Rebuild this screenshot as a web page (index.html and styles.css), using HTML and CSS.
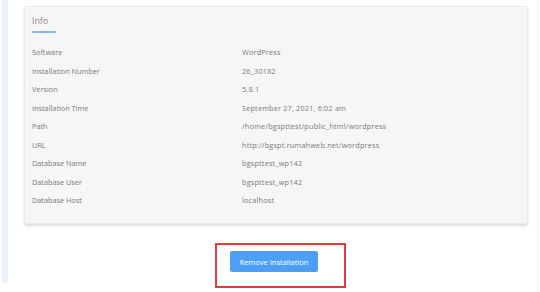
FILE: index.html
```html
<!DOCTYPE html>
<html>
<head>
<meta charset="utf-8">
<link rel="stylesheet" href="styles.css">
</head>
<body>
<div class="frame">
  <div class="strip"></div>
  <div class="content">
    <div class="card">
      <div class="title">Info</div>
      <div class="underline"></div>
      <div class="rows">
        <div class="label">Software</div><div class="value">WordPress</div>
        <div class="label">Installation Number</div><div class="value">26_30182</div>
        <div class="label">Version</div><div class="value">5.8.1</div>
        <div class="label">Installation Time</div><div class="value">September 27, 2021, 6:02 am</div>
        <div class="label">Path</div><div class="value">/home/bgspttest/public_html/wordpress</div>
        <div class="label">URL</div><div class="value">http://bgspt.rumahweb.net/wordpress</div>
        <div class="label">Database Name</div><div class="value">bgspttest_wp142</div>
        <div class="label">Database User</div><div class="value">bgspttest_wp142</div>
        <div class="label">Database Host</div><div class="value">localhost</div>
      </div>
    </div>
    <div class="actions">
      <button class="btn">Remove Installation</button>
      <div class="highlight"></div>
    </div>
  </div>
  <div class="rline"></div>
</div>
</body>
</html>
```

FILE: styles.css
```css
html, body {
  margin: 0;
  padding: 0;
  background: #ffffff;
}
body {
  width: 540px;
  height: 292px;
  overflow: hidden;
  font-family: "Open Sans", "DejaVu Sans", sans-serif;
}
.frame {
  display: flex;
  height: 292px;
}
.strip {
  width: 6px;
  height: 283px;
  margin-left: 2px;
  background: #edf3fa;
}
.content {
  width: 504px;
  padding: 6px 0 0 16px;
  display: flex;
  flex-direction: column;
}
.rline {
  width: 1px;
  height: 292px;
  margin-left: 9px;
  background: #f0f0f0;
}
.card {
  height: 218px;
  box-sizing: border-box;
  background: #f6f6f6;
  border: 1px solid #e9e9e9;
  border-radius: 3px;
  box-shadow: 0 2px 3px rgba(0, 0, 0, 0.14);
  padding: 9px 8px 0 7px;
}
.title {
  font-size: 8.8px;
  line-height: 10px;
  color: #8a8a8a;
}
.underline {
  width: 24px;
  height: 2px;
  margin-top: 5px;
  background: #86b5ef;
  border-radius: 1px;
}
.rows {
  margin-top: 10px;
  display: grid;
  grid-template-columns: 210px 1fr;
  grid-auto-rows: 18.5px;
  align-items: center;
  font-size: 7.3px;
  color: #7a7a7a;
}
.value {
  letter-spacing: 0.18px;
}
.actions {
  position: relative;
  display: flex;
  justify-content: center;
  padding-top: 27px;
  padding-right: 4px;
}
.btn {
  width: 88px;
  height: 21px;
  border: none;
  border-radius: 2px;
  background: #4d9ff6;
  color: #ffffff;
  font-family: "Open Sans", "DejaVu Sans", sans-serif;
  font-size: 7.5px;
  padding: 0;
}
.highlight {
  position: absolute;
  left: 191px;
  top: 19px;
  width: 131px;
  height: 45px;
  box-sizing: border-box;
  border-width: 2px;
  border-style: solid;
  border-color: #e53b3c;
}
```
